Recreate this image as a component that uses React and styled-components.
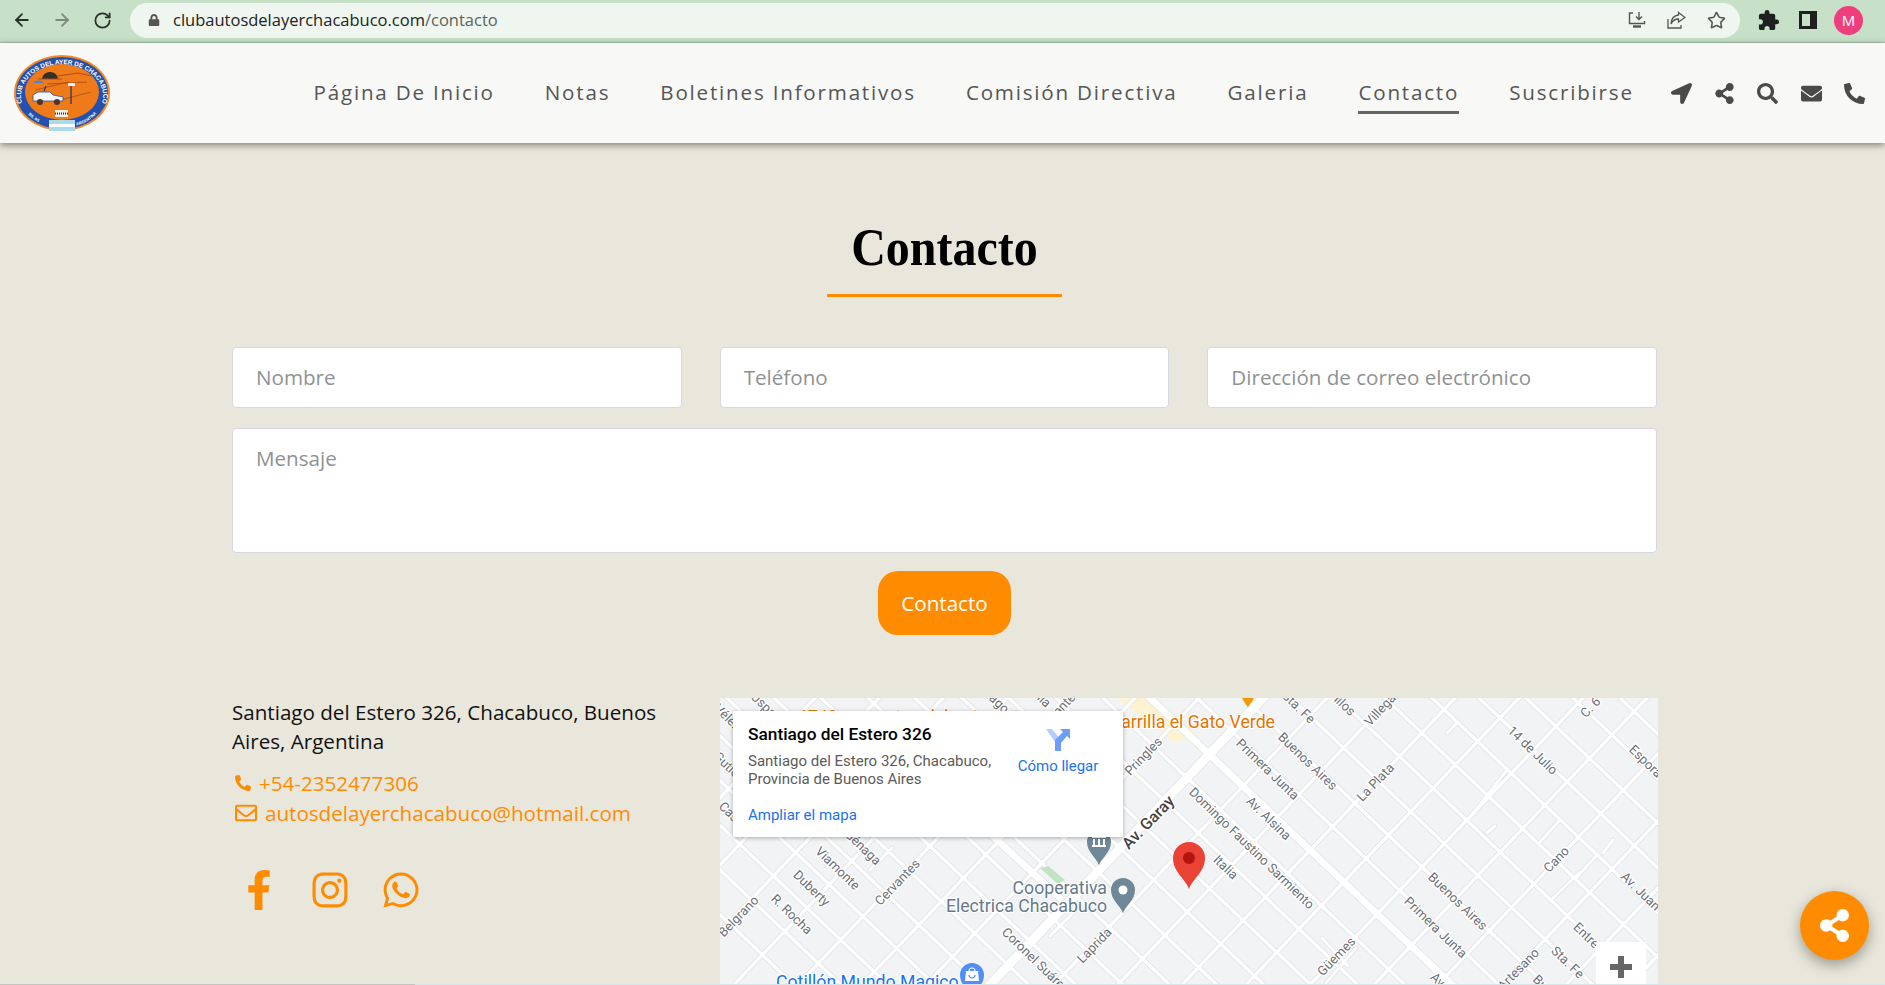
import React from "react";
import styled, { createGlobalStyle } from "styled-components";
import { ArrowLeft, ArrowRight, RotateCw, Star } from "lucide-react";
import {
  FaLocationArrow,
  FaShareAlt,
  FaSearch,
  FaEnvelope,
  FaPhoneAlt,
  FaRegEnvelope,
  FaFacebookF,
  FaInstagram,
  FaWhatsapp,
  FaLock,
} from "react-icons/fa";
import { MdExtension } from "react-icons/md";

const ORANGE = "#ff8c00";

const navItems = [
  "Página De Inicio",
  "Notas",
  "Boletines Informativos",
  "Comisión Directiva",
  "Galeria",
  "Contacto",
  "Suscribirse",
];

// the map streets run in two regular diagonal families
const SLOPE_DOWN = 0.95;
const SLOPE_UP = 1.05;
const downRoads = Array.from({ length: 34 }, (_, i) => 618 + 47 * (i - 18));
const upRoads = Array.from({ length: 22 }, (_, i) => 95 + 64 * i);
const shortRoads = [
  [748, 122, 787, 72],
  [727, 35, 737, 25],
  [767, 135, 775, 128],
  [883, 155, 893, 142],
  [820, 144, 840, 122],
  [833, 200, 860, 174],
  [857, 179, 877, 157],
  [150, 172, 172, 150],
  [330, 238, 352, 216],
  [602, 240, 628, 268],
  [636, 250, 606, 285],
];

const labels = [
  ["14 de Julio", 812, 53, 44],
  ["Esporá", 925, 64, 44],
  ["Villegas", 663, 10, -47],
  ["La Plata", 656, 85, -46],
  ["C. 6", 871, 10, -46],
  ["Cano", 837, 162, -46],
  ["Av. Juan", 920, 194, 44],
  ["Buenos Aires", 737, 204, 44],
  ["Primera Junta", 715, 230, 44],
  ["Güemes", 617, 259, -46],
  ["Entre Ríos", 876, 248, 44],
  ["Sta. Fe", 847, 265, 44],
  ["Artesano", 799, 272, -46],
  ["Buenos", 830, 295, 44],
  ["Av. Alsina", 732, 297, 44],
  ["Hilos", 622, 6, 44],
  ["Buenos Aires", 587, 64, 44],
  ["Primera Junta", 547, 72, 44],
  ["Av. Alsina", 548, 121, 44],
  ["Domingo Faustino Sarmiento", 531, 151, 44],
  ["Italia", 505, 170, 44],
  ["Sta. Fe", 578, 10, 44],
  ["Pringles", 424, 59, -46],
  ["Laprida", 375, 248, -46],
  ["Coronel Suárez", 315, 263, 44],
  ["Uspallata", 52, 16, 44],
  ["Vélez", 7, 20, 44],
  ["Gutiérrez", 14, 75, 44],
  ["Castro", 14, 120, 44],
  ["Viamonte", 117, 171, 44],
  ["Azcuénaga", 135, 143, 44],
  ["Duberty", 91, 191, 44],
  ["Cervantes", 178, 185, -46],
  ["Belgrano", 19, 219, -46],
  ["R. Rocha", 71, 217, 44],
  ["Santiago", 268, -4, 44],
  ["Italia", 318, -2, 44],
  ["Cervantes", 338, 14, -46],
];

const GlobalStyle = createGlobalStyle`
  html, body {
    margin: 0;
    padding: 0;
    height: 100%;
    overflow: hidden;
    background: #e9e7dc;
    font-family: "Open Sans", sans-serif;
  }
  * {
    box-sizing: border-box;
  }
`;

const Page = styled.div`
  width: 100%;
  height: 985px;
  overflow: hidden;
  display: flex;
  flex-direction: column;
`;

const BrowserBar = styled.div`
  height: 43px;
  flex: none;
  display: flex;
  align-items: center;
  padding: 0 22px 2px 2px;
  background: #c7e1c8;
  border-bottom: 1px solid #a9c6aa;
`;

const BrowserBtn = styled.div`
  width: 40px;
  height: 30px;
  display: flex;
  align-items: center;
  justify-content: center;
  color: ${(p) => p.$color || "#2b2f2c"};
`;

const UrlPill = styled.div`
  flex: 1;
  height: 35px;
  margin: 0 8px 0 8px;
  padding: 0 14px 0 18px;
  display: flex;
  align-items: center;
  border-radius: 18px;
  background: #eff6ef;
  color: #222;
  font-size: 16.5px;
`;

const UrlText = styled.span`
  margin: 0 0 2px 13px;
  flex: 1;
`;

const UrlPath = styled.span`
  color: #5c625d;
`;

const PillIcons = styled.div`
  display: flex;
  align-items: center;
  gap: 21px;
`;

const Avatar = styled.div`
  width: 29px;
  height: 29px;
  margin-left: 6px;
  border-radius: 50%;
  background: #ee3f7d;
  color: #fff;
  font-size: 15px;
  display: flex;
  align-items: center;
  justify-content: center;
`;

const Header = styled.header`
  height: 100px;
  flex: none;
  position: relative;
  z-index: 2;
  display: flex;
  align-items: center;
  justify-content: space-between;
  padding: 0 20px 0 13px;
  background: #f8f8f6;
  box-shadow: 0 2px 7px rgba(40, 40, 30, 0.55);
`;

const Nav = styled.nav`
  display: flex;
  align-items: center;
`;

const NavLink = styled.a`
  margin-right: 50px;
  padding: 6px 0 5px;
  color: #555;
  font-size: 20.6px;
  line-height: 27px;
  letter-spacing: 1.8px;
  white-space: nowrap;
  border-bottom: 3px solid ${(p) => (p.$active ? "#666" : "transparent")};
`;

const NavIcons = styled.div`
  display: flex;
  align-items: center;
  gap: 22.3px;
  margin-left: -13px;
  color: #4a4a48;
  font-size: 21px;
`;

const Main = styled.main`
  width: 1425px;
  margin-left: 232px;
  display: flex;
  flex-direction: column;
`;

const Title = styled.h1`
  width: 235px;
  margin: 72px auto 0;
  padding-bottom: 16px;
  border-bottom: 3px solid ${ORANGE};
  color: #000;
  font-family: "Liberation Serif", serif;
  font-size: 48px;
  line-height: 63px;
  font-weight: 700;
  text-align: center;
`;

const TitleText = styled.span`
  display: inline-block;
  transform: scaleY(1.1);
`;

const FormRow = styled.div`
  display: grid;
  grid-template-columns: repeat(3, 1fr);
  gap: 38px;
  margin-top: 50px;
`;

const Field = styled.input`
  height: 61px;
  width: 100%;
  padding: 0 23px 2px;
  border: 1px solid #d6d6e4;
  border-radius: 4px;
  background: #fff;
  font-family: "Open Sans", sans-serif;
  font-size: 20.6px;
  outline: none;
  &::placeholder {
    color: #8f9294;
    opacity: 1;
  }
`;

const Message = styled.textarea`
  display: block;
  width: 100%;
  height: 125px;
  margin-top: 20px;
  padding: 15px 23px;
  border: 1px solid #d6d6e4;
  border-radius: 4px;
  background: #fff;
  resize: none;
  font-family: "Open Sans", sans-serif;
  font-size: 20.6px;
  outline: none;
  &::placeholder {
    color: #8f9294;
    opacity: 1;
  }
`;

const Submit = styled.button`
  align-self: center;
  width: 133px;
  height: 64px;
  margin-top: 18px;
  border: 0;
  border-radius: 20px;
  background: ${ORANGE};
  color: #fff;
  font-family: "Open Sans", sans-serif;
  font-size: 20.6px;
`;

const Lower = styled.section`
  display: grid;
  grid-template-columns: 450px 938px;
  gap: 38px;
  margin-top: 63px;
`;

const Info = styled.div`
  padding-top: 0;
`;

const Address = styled.p`
  margin: 0 0 12px;
  color: #111;
  font-size: 20.6px;
  line-height: 29px;
`;

const ContactLine = styled.a`
  display: flex;
  align-items: center;
  gap: ${(p) => p.$gap}px;
  height: 30px;
  padding-left: 3px;
  color: ${ORANGE};
  font-size: 20.6px;
`;

const Socials = styled.div`
  display: flex;
  align-items: center;
  margin: 42px 0 0 -9px;
  color: ${ORANGE};
  font-size: 40px;
`;

const SocialLink = styled.a`
  width: 71px;
  display: flex;
  justify-content: center;
`;

const MapBox = styled.div`
  position: relative;
  height: 300px;
  overflow: hidden;
  background: #f2f3f5;
`;

const MapCanvas = styled.svg`
  display: block;
  width: 938px;
  height: 300px;
`;

const StreetLabel = styled.text`
  font-family: Roboto, sans-serif;
  font-size: 13px;
  fill: #6c7076;
  stroke: #fff;
  stroke-width: 2.5px;
  paint-order: stroke;
  text-anchor: middle;
  dominant-baseline: middle;
`;

const MainLabel = styled(StreetLabel)`
  font-size: 16px;
  font-weight: 500;
  fill: #3f444a;
`;

const PoiLabel = styled.text`
  font-family: Roboto, sans-serif;
  font-size: 17.7px;
  fill: ${(p) => p.$color};
  text-anchor: ${(p) => p.$anchor || "start"};
  stroke: #fff;
  stroke-width: 2px;
  paint-order: stroke;
`;

const InfoCard = styled.div`
  position: absolute;
  left: 13px;
  top: 13px;
  width: 390px;
  height: 126px;
  padding: 11px 15px 0;
  display: flex;
  justify-content: space-between;
  background: #fff;
  border-radius: 2px;
  box-shadow: 0 1px 4px rgba(0, 0, 0, 0.3);
  font-family: Roboto, sans-serif;
`;

const CardText = styled.div`
  width: 262px;
`;

const CardTitle = styled.div`
  color: #000;
  font-size: 17.3px;
  line-height: 24px;
  font-weight: 500;
`;

const CardAddress = styled.div`
  margin-top: 6px;
  color: #5b5b5b;
  font-size: 15px;
  line-height: 18px;
`;

const CardLink = styled.a`
  display: block;
  margin-top: 18px;
  color: #1a73e8;
  font-size: 15px;
`;

const Directions = styled.div`
  width: 90px;
  margin-top: 5px;
  margin-right: 5px;
  display: flex;
  flex-direction: column;
  align-items: center;
  gap: 6px;
  color: #1a73e8;
  font-size: 15px;
  white-space: nowrap;
`;

const ZoomControl = styled.div`
  position: absolute;
  left: 876px;
  top: 244px;
  width: 50px;
  height: 50px;
  display: flex;
  align-items: flex-start;
  justify-content: center;
  padding-top: 13px;
  background: #fff;
`;

const ShareFab = styled.div`
  position: fixed;
  left: 1800px;
  top: 891px;
  width: 69px;
  height: 69px;
  display: flex;
  align-items: center;
  justify-content: center;
  border-radius: 50%;
  background: ${ORANGE};
  color: #fff;
  font-size: 33px;
  box-shadow: 0 5px 14px rgba(60, 60, 40, 0.45);
`;

const BottomEdge = styled.div`
  position: fixed;
  left: 0;
  right: 0;
  bottom: 0;
  height: 1px;
  background: linear-gradient(to right, #c4c4c0 415px, #d5e6ea 415px);
`;

const Logo = () => (
  <svg width="98" height="78" viewBox="0 0 98 78">
    <defs>
      <path id="logoArc" d="M10 52 A41 32 0 1 1 88 52" />
      <path id="logoLeft" d="M12 56 Q20 68 36 72" />
      <path id="logoRight" d="M62 72 Q78 68 86 56" />
    </defs>
    <ellipse cx="49" cy="39" rx="48" ry="38" fill="#f08a24" />
    <ellipse cx="49" cy="39" rx="46" ry="36" fill="#2450b0" />
    <ellipse cx="49" cy="38" rx="37" ry="28" fill="#ee7a1a" />
    <text fontFamily="Liberation Sans" fontSize="6.4" fontWeight="700" fill="#fff" textAnchor="middle">
      <textPath href="#logoArc" startOffset="50%">
        CLUB AUTOS DEL AYER DE CHACABUCO
      </textPath>
    </text>
    <text fontFamily="Liberation Sans" fontSize="4" fontWeight="700" fill="#fff">
      <textPath href="#logoLeft" startOffset="18%">
        BS. AS
      </textPath>
      <textPath href="#logoRight" startOffset="5%">
        ARGENTINA
      </textPath>
    </text>
    <path d="M29 25a8 7 0 0 1 16 0z" fill="#33302c" />
    <path d="M25 25h24M45 22l20-3 14 3" stroke="#b84d14" strokeWidth="1.2" fill="none" />
    <path d="M22 36l34-8M40 48l38-10M34 30l40-2" stroke="#a8481a" strokeWidth="0.8" />
    <path d="M20 29a6 4 0 0 1 11 0z" fill="#5d7fc4" />
    <path d="M31 37l2-5M58 30v20" stroke="#26305e" strokeWidth="1.2" />
    <rect x="55" y="29" width="7" height="3" fill="#e8eef5" />
    <path d="M20 47v-6l5-3h12l3 3 10 2v4z" fill="#f4f6f8" stroke="#37508e" strokeWidth="0.8" />
    <circle cx="27" cy="48" r="3" fill="#4b3530" />
    <circle cx="44" cy="48" r="3" fill="#4b3530" />
    <rect x="42" y="56" width="13" height="7" fill="#f2f2ea" />
    <path d="M42 59.5h13" stroke="#26305e" strokeWidth="2" strokeDasharray="1 1" />
    <rect x="36" y="66" width="26" height="11" fill="#a8dcec" />
    <rect x="36" y="70" width="26" height="3" fill="#fff" />
  </svg>
);

const InstallIcon = () => (
  <svg width="18" height="19" viewBox="0 0 18 19" fill="none" stroke="#555" strokeWidth="1.4">
    <path d="M5 2H1.5v10.5h15V10M11 1v7M8 5.5L11 8.5 14 5.5" />
    <path d="M5 15.5h8" strokeWidth="2.4" />
  </svg>
);

const ShareIcon = () => (
  <svg width="19" height="18" viewBox="0 0 19 18" fill="none" stroke="#555" strokeWidth="1.3">
    <path d="M1 8v9h13v-3" />
    <path d="M11.5 1.5L18 6.5l-6.5 4.5V8C7.5 8 5.5 10 4 13c.3-5 3-8.5 7.5-9z" />
  </svg>
);

const SidePanelIcon = () => (
  <svg width="18" height="18" viewBox="0 0 18 18">
    <path d="M0 0h18v18H0zM3 3v12h8V3z" fill="#1d201e" fillRule="evenodd" />
  </svg>
);

const Pin = ({ x, y, r, color, children }) => {
  const tip = r * 1.95;
  return (
    <g transform={`translate(${x} ${y})`}>
      <path
        d={`M0 ${tip} C${-r * 0.15} ${tip * 0.7} ${-r} ${r * 0.9} ${-r} 0 A${r} ${r} 0 1 1 ${r} 0 C${r} ${r * 0.9} ${r * 0.15} ${tip * 0.7} 0 ${tip}z`}
        fill={color}
      />
      {children}
    </g>
  );
};

const MapArt = () => {
  const roads = [];
  downRoads.forEach((x0) => {
    roads.push({ x1: x0 - 10 / SLOPE_DOWN, y1: -10, x2: x0 + 310 / SLOPE_DOWN, y2: 310, w: x0 === 430 ? 7 : 3.4 });
  });
  upRoads.forEach((c) => {
    roads.push({ x1: c + 10 / SLOPE_UP, y1: -10, x2: c - 310 / SLOPE_UP, y2: 310, w: c === 543 ? 9 : 3.4 });
  });
  shortRoads.forEach(([x1, y1, x2, y2]) => roads.push({ x1, y1, x2, y2, w: 3 }));
  roads.push({ x1: 240, y1: 108, x2: 340, y2: 200, w: 7 });

  return (
    <MapCanvas viewBox="0 0 938 300">
      <path d="M396 0l30 0 50 35-20 10z" fill="#fdf3d2" />
      {roads.map((r, i) => (
        <line key={`c${i}`} x1={r.x1} y1={r.y1} x2={r.x2} y2={r.y2} stroke="#dfe1e5" strokeWidth={r.w + 1.4} strokeLinecap="round" />
      ))}
      {roads.map((r, i) => (
        <line key={`r${i}`} x1={r.x1} y1={r.y1} x2={r.x2} y2={r.y2} stroke="#fff" strokeWidth={r.w} strokeLinecap="round" />
      ))}
      <path d="M320 170l8-2 17 14-7 4z" fill="#c0e3c5" />
      {labels.map(([text, x, y, angle], i) => (
        <StreetLabel key={i} x={x} y={y} transform={`rotate(${angle} ${x} ${y})`}>
          {text}
        </StreetLabel>
      ))}
      <MainLabel x={429} y={125} transform="rotate(-46 429 125)">
        Av. Garay
      </MainLabel>
      <PoiLabel x={78} y={25} $color="#e37400">
        6740 repuestos del automotor
      </PoiLabel>
      <PoiLabel x={555} y={30} $color="#e37400" $anchor="end">
        Parrilla el Gato Verde
      </PoiLabel>
      <PoiLabel x={387} y={196} $color="#66798a" $anchor="end">
        Cooperativa
      </PoiLabel>
      <PoiLabel x={387} y={214} $color="#66798a" $anchor="end">
        Electrica Chacabuco
      </PoiLabel>
      <PoiLabel x={56} y={290} $color="#1a73e8">
        Cotillón Mundo Magico
      </PoiLabel>
      <Pin x={528} y={-2} r={6} color="#f29900" />
      <Pin x={403} y={192} r={12} color="#6f8796">
        <circle r="4.5" fill="#fff" />
      </Pin>
      <Pin x={379} y={144} r={12} color="#6f8796">
        <path d="M-7 -6h14v2h-14zM-6 -3h2v6h-2zM-1 -3h2v6h-2zM4 -3h2v6h-2zM-7 3h14v2h-14z" fill="#fff" />
      </Pin>
      <Pin x={252} y={277} r={12} color="#4f8ff7">
        <path d="M-6 -4h12l1 10h-14z" fill="#fff" />
        <path d="M-3 -4a3 3 0 0 1 6 0" fill="none" stroke="#fff" strokeWidth="1.2" />
        <path d="M-3 0a3 3 0 0 0 6 0" fill="none" stroke="#4f8ff7" strokeWidth="1.2" />
      </Pin>
      <Pin x={469} y={160} r={16} color="#ea4335">
        <circle r="6" fill="#b3140f" />
      </Pin>
    </MapCanvas>
  );
};

const DirectionsIcon = () => (
  <svg width="24" height="24" viewBox="0 0 24 24">
    <path d="M0 2h6l9 11v11H9V15z" fill="#b4cdfb" />
    <path d="M9 24V13L17 5l-3-3h10v10l-3-3-6 7v8z" fill="#6c9ef8" />
  </svg>
);

const App = () => {
  return (
    <Page>
      <GlobalStyle />
      <BrowserBar>
        <BrowserBtn>
          <ArrowLeft size={20} strokeWidth={2.2} />
        </BrowserBtn>
        <BrowserBtn $color="#7c8a7d">
          <ArrowRight size={20} strokeWidth={2.2} />
        </BrowserBtn>
        <BrowserBtn>
          <RotateCw size={19} strokeWidth={2.2} />
        </BrowserBtn>
        <UrlPill>
          <FaLock size={12} color="#555" />
          <UrlText>
            clubautosdelayerchacabuco.com<UrlPath>/contacto</UrlPath>
          </UrlText>
          <PillIcons>
            <InstallIcon />
            <ShareIcon />
            <Star size={19} color="#555" strokeWidth={2} />
          </PillIcons>
        </UrlPill>
        <BrowserBtn>
          <MdExtension size={23} color="#1d201e" />
        </BrowserBtn>
        <BrowserBtn>
          <SidePanelIcon />
        </BrowserBtn>
        <Avatar>M</Avatar>
      </BrowserBar>

      <Header>
        <Logo />
        <Nav>
          {navItems.map((item) => (
            <NavLink key={item} $active={item === "Contacto"}>
              {item}
            </NavLink>
          ))}
          <NavIcons>
            <FaLocationArrow />
            <FaShareAlt />
            <FaSearch />
            <FaEnvelope />
            <FaPhoneAlt />
          </NavIcons>
        </Nav>
      </Header>

      <Main>
        <Title>
          <TitleText>Contacto</TitleText>
        </Title>
        <FormRow>
          <Field placeholder="Nombre" />
          <Field placeholder="Teléfono" />
          <Field placeholder="Dirección de correo electrónico" />
        </FormRow>
        <Message placeholder="Mensaje" />
        <Submit>Contacto</Submit>

        <Lower>
          <Info>
            <Address>Santiago del Estero 326, Chacabuco, Buenos Aires, Argentina</Address>
            <ContactLine $gap={8}>
              <FaPhoneAlt size={16} />
              +54-2352477306
            </ContactLine>
            <ContactLine $gap={8}>
              <FaRegEnvelope size={22} />
              autosdelayerchacabuco@hotmail.com
            </ContactLine>
            <Socials>
              <SocialLink>
                <FaFacebookF />
              </SocialLink>
              <SocialLink>
                <FaInstagram />
              </SocialLink>
              <SocialLink>
                <FaWhatsapp />
              </SocialLink>
            </Socials>
          </Info>
          <MapBox>
            <MapArt />
            <InfoCard>
              <CardText>
                <CardTitle>Santiago del Estero 326</CardTitle>
                <CardAddress>
                  Santiago del Estero 326, Chacabuco,
                  <br />
                  Provincia de Buenos Aires
                </CardAddress>
                <CardLink>Ampliar el mapa</CardLink>
              </CardText>
              <Directions>
                <DirectionsIcon />
                Cómo llegar
              </Directions>
            </InfoCard>
            <ZoomControl>
              <svg width="24" height="24" viewBox="0 0 24 24">
                <path d="M9 1h6v8h8v6h-8v8H9v-8H1V9h8z" fill="#666" />
              </svg>
            </ZoomControl>
          </MapBox>
        </Lower>
      </Main>

      <ShareFab>
        <FaShareAlt />
      </ShareFab>
      <BottomEdge />
    </Page>
  );
};

export default App;
